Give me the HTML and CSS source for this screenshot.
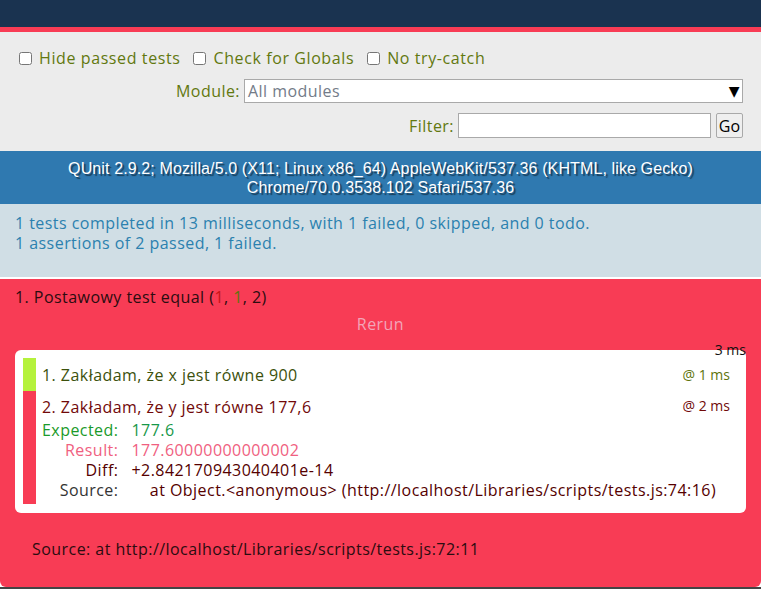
FILE: index.html
```html
<!DOCTYPE html>
<html lang="pl">
<head>
<meta charset="utf-8">
<title>QUnit</title>
<link rel="stylesheet" href="styles.css">
</head>
<body>
<div class="qunit">
  <header class="banner"></header>
  <div class="toolbar">
    <div class="checks">
      <label class="check"><input type="checkbox"> Hide passed tests</label>
      <label class="check"><input type="checkbox"> Check for Globals</label>
      <label class="check"><input type="checkbox"> No try-catch</label>
    </div>
    <div class="row module-row">
      <span class="lbl">Module:</span>
      <div class="select"><span>All modules</span><span class="arrow">▼</span></div>
    </div>
    <div class="row filter-row">
      <span class="lbl">Filter:</span>
      <input class="filter" type="text">
      <button class="go">Go</button>
    </div>
  </div>
  <div class="useragent">QUnit 2.9.2; Mozilla/5.0 (X11; Linux x86_64) AppleWebKit/537.36 (KHTML, like Gecko)<br>Chrome/70.0.3538.102 Safari/537.36</div>
  <div class="result">1 tests completed in 13 milliseconds, with 1 failed, 0 skipped, and 0 todo.<br>1 assertions of 2 passed, 1 failed.</div>
  <div class="tests">
    <div class="test-name">1. Postawowy test equal (<span class="c-fail">1</span>, <span class="c-pass">1</span>, 2)</div>
    <div class="rerun">Rerun</div>
    <div class="card-wrap">
      <span class="runtime">3 ms</span>
      <ol class="asserts">
        <li class="assert pass">
          <span class="msg">1. Zakładam, że x jest równe 900</span>
          <span class="at">@ 1 ms</span>
        </li>
        <li class="assert fail">
          <div class="head">
            <span class="msg">2. Zakładam, że y jest równe 177,6</span>
            <span class="at">@ 2 ms</span>
          </div>
          <table class="details">
            <tr class="exp"><th>Expected:</th><td>177.6</td></tr>
            <tr class="res"><th>Result:</th><td>177.60000000000002</td></tr>
            <tr class="diff"><th>Diff:</th><td>+2.842170943040401e-14</td></tr>
            <tr class="src"><th>Source:</th><td class="pre">    at Object.&lt;anonymous&gt; (http://localhost/Libraries/scripts/tests.js:74:16)</td></tr>
          </table>
        </li>
      </ol>
    </div>
    <div class="source">Source: at http://localhost/Libraries/scripts/tests.js:72:11</div>
  </div>
  <div class="bottom-line"></div>
</div>
</body>
</html>
```
FILE: styles.css
```css
* { box-sizing: border-box; }
html, body { margin: 0; padding: 0; background: #fff; }
body { font-family: "Open Sans", "DejaVu Sans", sans-serif; font-size: 16px; letter-spacing: 0.45px; }

.banner { height: 27px; background: #1a3350; }
.toolbar {
  border-top: 5px solid #f83c55;
  background: #ececec;
  height: 124px;
  padding: 14px 18px 0 19px;
  color: #62780f;
}
.checks { display: flex; align-items: center; height: 24px; }
.check { display: flex; align-items: center; margin-right: 13px; letter-spacing: 0.6px; }
.check input { width: 13px; height: 13px; margin: 0 7px 0 0; }
.row { display: flex; justify-content: flex-end; align-items: center; }
.module-row { margin-top: 9px; height: 24px; }
.lbl { margin-right: 4px; }
.select {
  width: 499px; height: 24px; background: #fff; border: 1px solid #a9a9a9;
  display: flex; justify-content: space-between; align-items: center;
  padding: 0 2px 0 3px; color: #737b88;
}
.select .arrow { color: #000; font-size: 14px; font-family: "DejaVu Sans", sans-serif; }
.filter-row { margin-top: 10px; height: 25px; }
.filter { width: 253px; height: 25px; border: 1px solid #a9a9a9; margin: 0 5px 0 0; background: #fff; }
.go {
  width: 27px; height: 25px; padding: 0; border: 1px solid #a9a9a9; border-radius: 2px;
  background: #efefef; font: inherit; letter-spacing: 0; color: #000;
}

.useragent {
  background: #2f79b0; color: #fff; text-align: center;
  font-family: "Liberation Sans", Arial, sans-serif; font-size: 16px; line-height: 19px; letter-spacing: 0.12px;
  padding: 8px 10px 7px; text-shadow: 2px 2px 1px rgba(0,0,0,0.5);
}
.result {
  background: #d0dee5; color: #2b81af; padding: 9px 15px; line-height: 20px;
  border-bottom: 2px solid #fff; height: 75px;
}
.tests {
  background: #f83c55; padding: 7px 15px 27px; border-radius: 0 0 6px 6px;
  color: #2b0c10;
}
.test-name { line-height: 22px; }
.c-fail { color: #c81414; }
.c-pass { color: #5e740b; }
.rerun { text-align: center; color: #f3a5b8; margin-top: 5px; line-height: 22px; }
.card-wrap { position: relative; margin-top: 15px; }
.runtime { position: absolute; right: 0; top: -10px; color: #111; font-size: 14px; letter-spacing: 0; }
.asserts {
  list-style: none; margin: 0; padding: 8px 16px 9px 8px; background: #fff; border-radius: 6px;
}
.assert { border-left: 13px solid; padding-left: 6px; }
.assert.pass { border-color: #b5f23c; color: #3c510c; display: flex; justify-content: space-between; align-items: center; height: 33px; }
.assert.fail { border-color: #f83c55; color: #710909; padding-top: 5px; padding-bottom: 4px; }
.head { display: flex; justify-content: space-between; }
.at { font-size: 14px; letter-spacing: 0; }
.pass .at { color: #5e740b; }
.details { border-collapse: collapse; margin-top: 2px; }
.details th { text-align: right; font-weight: normal; padding: 0 13px 0 0; line-height: 20px; }
.details td { padding: 0; line-height: 20px; }
.exp th { color: #1a9a2a; }
.exp td { color: #17984a; }
.res th, .res td { color: #f06080; }
.diff th, .diff td { color: #500; }
.src th { color: #333; }
.src td { color: #500; }
.pre { white-space: pre; }
.source { padding: 25px 17px 0; color: #2b0c10; }
.bottom-line { height: 2px; background: #444; }
```
